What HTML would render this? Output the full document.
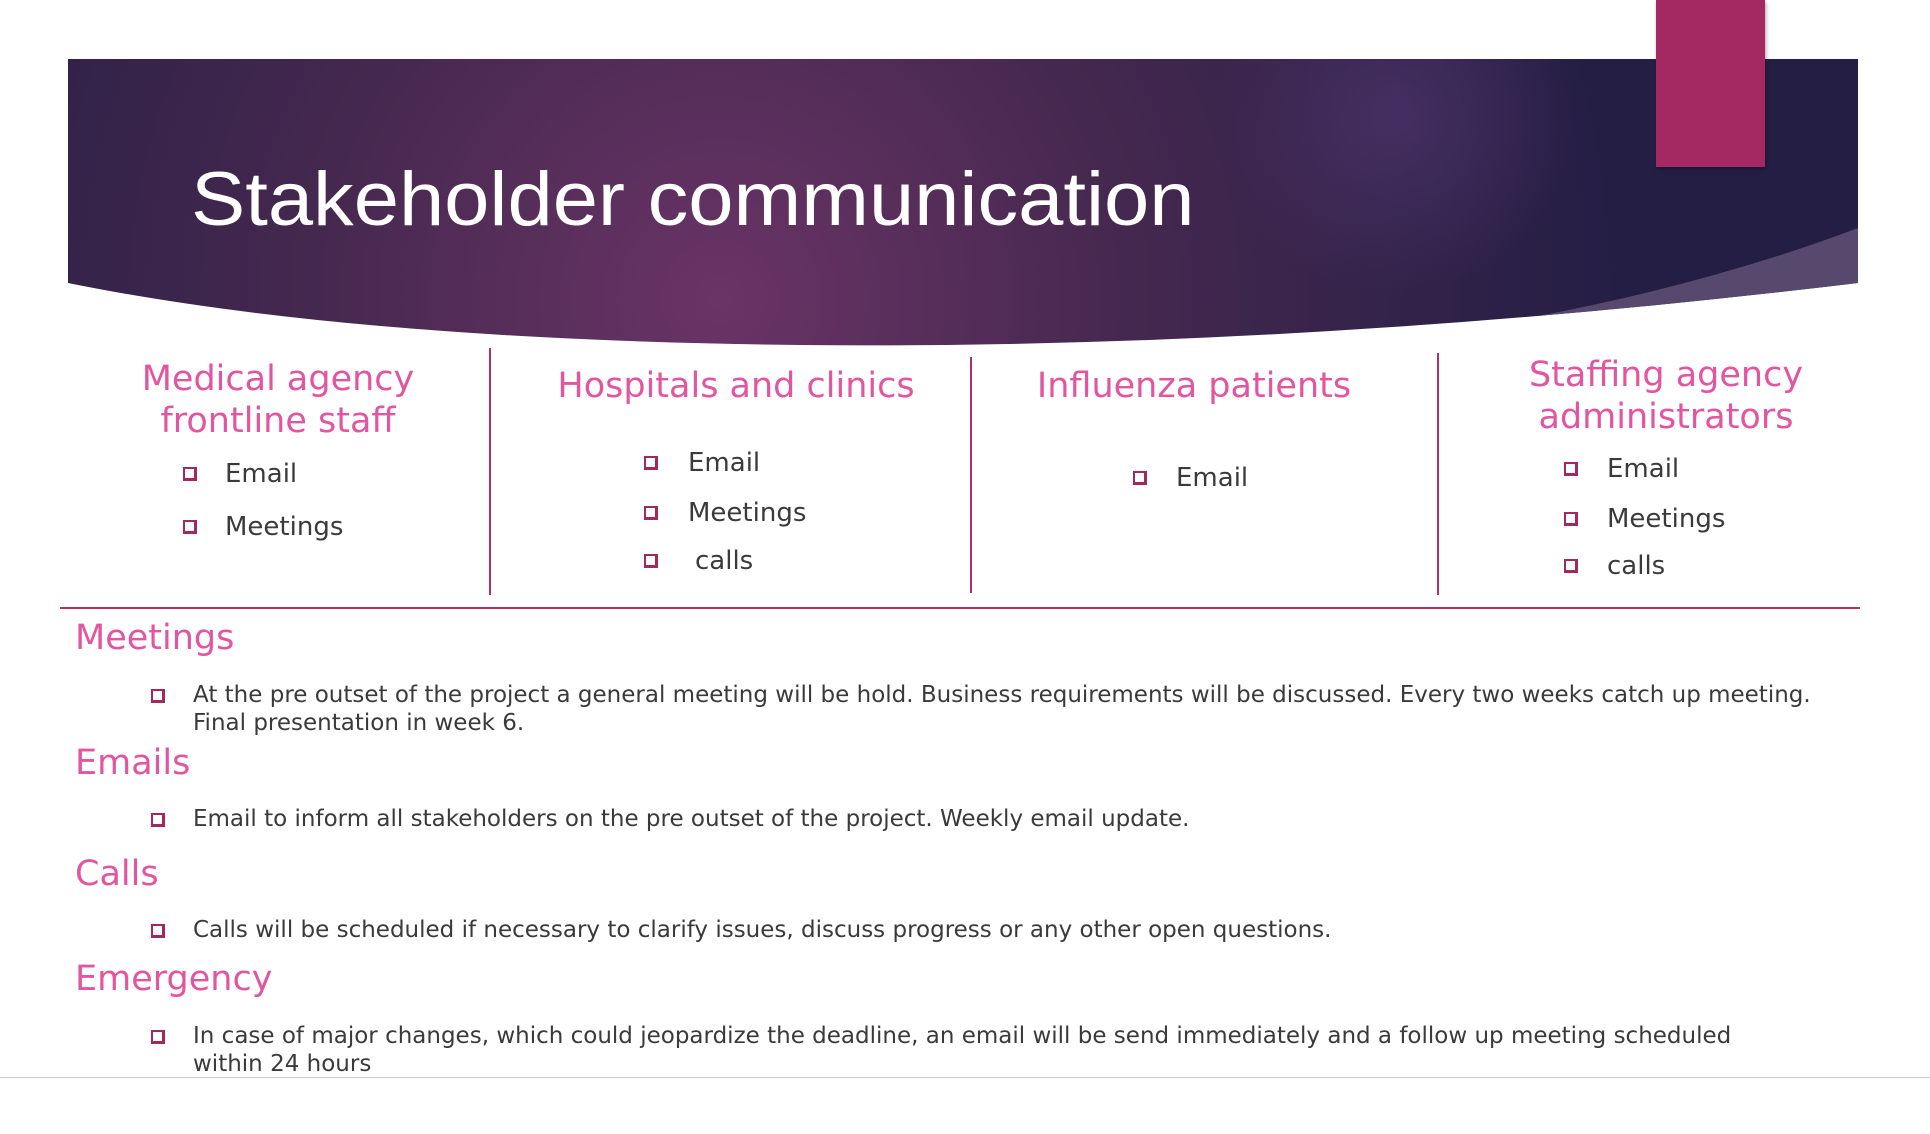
<!DOCTYPE html>
<html><head><meta charset="utf-8"><style>
body{margin:0;width:1930px;height:1134px;background:#fff;position:relative;overflow:hidden;font-family:"DejaVu Sans","Liberation Sans",sans-serif}
.a{position:absolute;white-space:nowrap}
.h{color:#e2559f;font-size:35px;transform-origin:0 0}
.c{text-align:center;line-height:42px}
.t{color:#3a3a3a;font-size:26px}
.b{font-size:23px;color:#3a3a3a;line-height:28px}
.bl{position:absolute;width:9px;height:9px;border:2px solid #a3285f;border-right-width:3px;border-bottom-width:3px;background:#fff}
.v{position:absolute;width:2px;background:#b0306a}
</style></head><body>
<svg class="a" style="left:0;top:0" width="1930" height="400">
<defs>
<radialGradient id="g" cx="720" cy="300" r="900" gradientUnits="userSpaceOnUse">
<stop offset="0" stop-color="#6a3466"/><stop offset="0.45" stop-color="#45284f"/><stop offset="1" stop-color="#241e45"/></radialGradient>
<radialGradient id="g2" cx="1395" cy="115" r="180" gradientUnits="userSpaceOnUse">
<stop offset="0" stop-color="#4a3268" stop-opacity="0.8"/><stop offset="1" stop-color="#4a3268" stop-opacity="0"/></radialGradient>
<clipPath id="cp"><path d="M68 59 H1858 V283 Q1300 350 800 345 Q350 340 68 283 Z"/></clipPath>
</defs>
<path d="M68 59 H1858 V283 Q1300 350 800 345 Q350 340 68 283 Z" fill="url(#g)"/>
<path d="M68 59 H1858 V283 Q1300 350 800 345 Q350 340 68 283 Z" fill="url(#g2)"/>
<path clip-path="url(#cp)" d="M1858 228 Q1620 318 1300 350 L1870 360 Z" fill="#57496d"/>
</svg>
<div class="a" style="left:1656px;top:0;width:109px;height:167px;background:#a42862;box-shadow:1px 2px 4px rgba(0,0,0,.35)"></div>
<div class="a" style="left:191px;top:156px;color:#fff;font-size:76px;font-family:'Liberation Sans',sans-serif;transform:scaleX(1.07);transform-origin:0 0">Stakeholder communication</div>

<div class="a h c" style="left:108px;top:358px;width:340px">Medical agency<br>frontline staff</div>
<div class="a h c" style="left:530px;top:365px;width:412px">Hospitals and clinics</div>
<div class="a h c" style="left:1010px;top:365px;width:368px">Influenza patients</div>
<div class="a h c" style="left:1490px;top:354px;width:352px">Staffing agency<br>administrators</div>

<div class="v" style="left:489px;top:348px;height:247px"></div>
<div class="v" style="left:970px;top:357px;height:236px"></div>
<div class="v" style="left:1437px;top:353px;height:242px"></div>

<div class="bl" style="left:183px;top:467px"></div><div class="a t" style="left:225px;top:459px">Email</div>
<div class="bl" style="left:183px;top:520px"></div><div class="a t" style="left:225px;top:512px">Meetings</div>
<div class="bl" style="left:644px;top:456px"></div><div class="a t" style="left:688px;top:448px">Email</div>
<div class="bl" style="left:644px;top:506px"></div><div class="a t" style="left:688px;top:498px">Meetings</div>
<div class="bl" style="left:644px;top:554px"></div><div class="a t" style="left:695px;top:546px">calls</div>
<div class="bl" style="left:1133px;top:471px"></div><div class="a t" style="left:1176px;top:463px">Email</div>
<div class="bl" style="left:1564px;top:462px"></div><div class="a t" style="left:1607px;top:454px">Email</div>
<div class="bl" style="left:1564px;top:512px"></div><div class="a t" style="left:1607px;top:504px">Meetings</div>
<div class="bl" style="left:1564px;top:559px"></div><div class="a t" style="left:1607px;top:551px">calls</div>

<div class="a" style="left:60px;top:607px;width:1800px;height:2px;background:#b0306a"></div>

<div class="a h" style="left:75px;top:618px">Meetings</div>
<div class="bl" style="left:151px;top:689px"></div>
<div class="a b" style="left:193px;top:681px">At the pre outset of the project a general meeting will be hold. Business requirements will be discussed. Every two weeks catch up meeting.<br>Final presentation in week 6.</div>
<div class="a h" style="left:75px;top:743px">Emails</div>
<div class="bl" style="left:151px;top:813px"></div>
<div class="a b" style="left:193px;top:805px">Email to inform all stakeholders on the pre outset of the project. Weekly email update.</div>
<div class="a h" style="left:75px;top:854px">Calls</div>
<div class="bl" style="left:151px;top:924px"></div>
<div class="a b" style="left:193px;top:916px">Calls will be scheduled if necessary to clarify issues, discuss progress or any other open questions.</div>
<div class="a h" style="left:75px;top:959px">Emergency</div>
<div class="bl" style="left:151px;top:1030px"></div>
<div class="a b" style="left:193px;top:1022px">In case of major changes, which could jeopardize the deadline, an email will be send immediately and a follow up meeting scheduled<br>within 24 hours</div>
<div class="a" style="left:0;top:1077px;width:1930px;height:1px;background:#c8c8c8"></div>
</body></html>
